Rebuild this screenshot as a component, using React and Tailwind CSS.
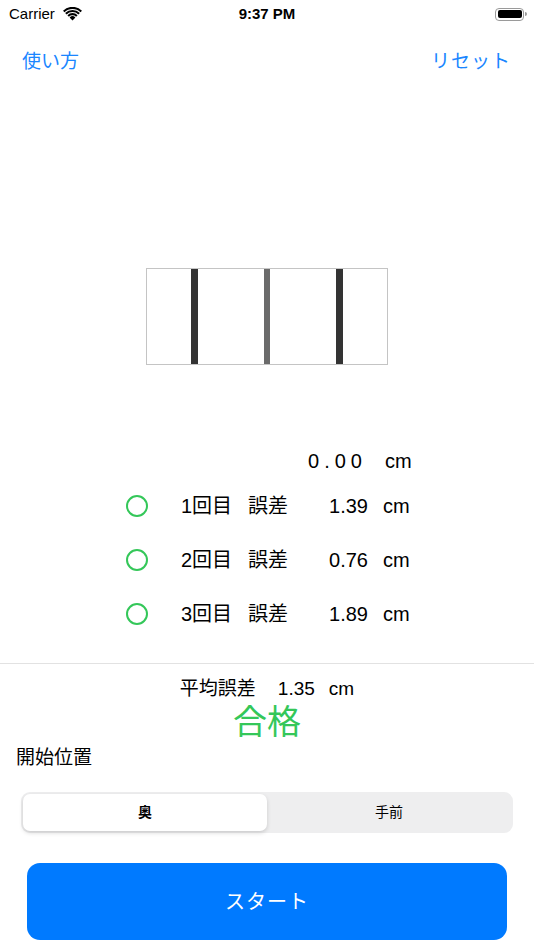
import React from 'react';

const font = { fontFamily: '"Liberation Sans", "Noto Sans CJK JP", sans-serif' };

const trials = [
  { label: '1回目', value: '1.39' },
  { label: '2回目', value: '0.76' },
  { label: '3回目', value: '1.89' },
];

function WifiIcon() {
  return (
    <svg width="19" height="14" viewBox="0 0 19 14" className="ml-[8px]">
      <path d="M9.5 13.5 L6.6 10.4 A4.2 4.2 0 0 1 12.4 10.4 Z" fill="#000" />
      <path d="M4.4 8.2 A7.3 7.3 0 0 1 14.6 8.2 L13.1 9.7 A5.2 5.2 0 0 0 5.9 9.7 Z" fill="#000" />
      <path d="M2.1 5.9 A10.6 10.6 0 0 1 16.9 5.9 L15.4 7.4 A8.5 8.5 0 0 0 3.6 7.4 Z" fill="#000" />
      <path d="M0 3.7 A13.6 13.6 0 0 1 19 3.7 L17.5 5.2 A11.5 11.5 0 0 0 1.5 5.2 Z" fill="#000" />
    </svg>
  );
}

function BatteryIcon() {
  return (
    <div className="flex items-center">
      <div className="w-[29px] h-[13px] rounded-[4px] border border-[#9a9a9a] p-[1.5px]">
        <div className="w-full h-full rounded-[2px] bg-black" />
      </div>
      <div className="w-[2px] h-[4px] rounded-r-sm bg-[#9a9a9a] ml-[1px]" />
    </div>
  );
}

export default function App() {
  return (
    <div className="w-[534px] h-[950px] bg-white flex flex-col text-black overflow-hidden" style={font}>
      {/* status bar */}
      <div className="h-[28px] relative flex items-center pl-[9px] pr-[7px]">
        <div className="flex items-center text-[15px]">
          Carrier
          <WifiIcon />
        </div>
        <div className="absolute left-0 right-0 text-center text-[15px] font-semibold">9:37 PM</div>
        <div className="ml-auto">
          <BatteryIcon />
        </div>
      </div>

      {/* nav */}
      <div className="mt-[14px] h-[40px] flex items-center justify-between pl-[22px] pr-[23px] text-[19px] text-[#1a86ff]">
        <span>使い方</span>
        <span className="tracking-[1px]">リセット</span>
      </div>

      {/* ruler box */}
      <div className="mt-[186px] self-center w-[242px] h-[97px] border border-[#c4c4c4] flex">
        <div className="w-[44px]" />
        <div className="w-[7px] bg-[#333333]" />
        <div className="w-[66px]" />
        <div className="w-[6px] bg-[#6b6b6b]" />
        <div className="w-[66px]" />
        <div className="w-[7px] bg-[#333333]" />
      </div>

      {/* current value */}
      <div className="mt-[82px] h-[28px] flex items-center text-[20px] pl-[287px]">
        <span className="w-[80px] text-right tracking-[5px] -mr-[5px]">0.00</span>
        <span className="ml-[23px]">cm</span>
      </div>

      {/* trials */}
      <div className="mt-[4px] flex flex-col">
        {trials.map((t) => (
          <div key={t.label} className="h-[54px] flex items-center pl-[126px] text-[20px]">
            <div className="w-[22px] h-[22px] rounded-full border-2 border-[#34c759]" />
            <span className="w-[84px] text-right">{t.label}</span>
            <span className="ml-[16px] w-[40px]">誤差</span>
            <span className="w-[80px] text-right">{t.value}</span>
            <span className="ml-[15px]">cm</span>
          </div>
        ))}
      </div>

      <div className="mt-[22px] h-px bg-[#e2e2e2]" />

      {/* average */}
      <div className="mt-[12px] h-[26px] flex items-center justify-center text-[19px]">
        <span>平均誤差</span>
        <span className="ml-[22px]">1.35</span>
        <span className="ml-[14px]">cm</span>
      </div>
      <div className="h-[40px] flex items-center justify-center text-[34px] leading-none text-[#34c759]">合格</div>

      <div className="mt-[3px] h-[26px] flex items-center pl-[16px] text-[19px]">開始位置</div>

      {/* segmented control */}
      <div className="mt-[21px] mx-[21px] h-[41px] rounded-[9px] bg-[#eeeeef] p-[2px] flex">
        <div className="flex-1 rounded-[7px] bg-white shadow-[0_2px_4px_rgba(0,0,0,0.15)] flex items-center justify-center text-[14px] font-bold">
          奥
        </div>
        <div className="flex-1 flex items-center justify-center text-[14px]">手前</div>
      </div>

      {/* start button */}
      <div className="mt-[30px] mx-[27px] h-[77px] rounded-[13px] bg-[#007aff] flex items-center justify-center text-white text-[20px] tracking-[1px]">
        スタート
      </div>
    </div>
  );
}
